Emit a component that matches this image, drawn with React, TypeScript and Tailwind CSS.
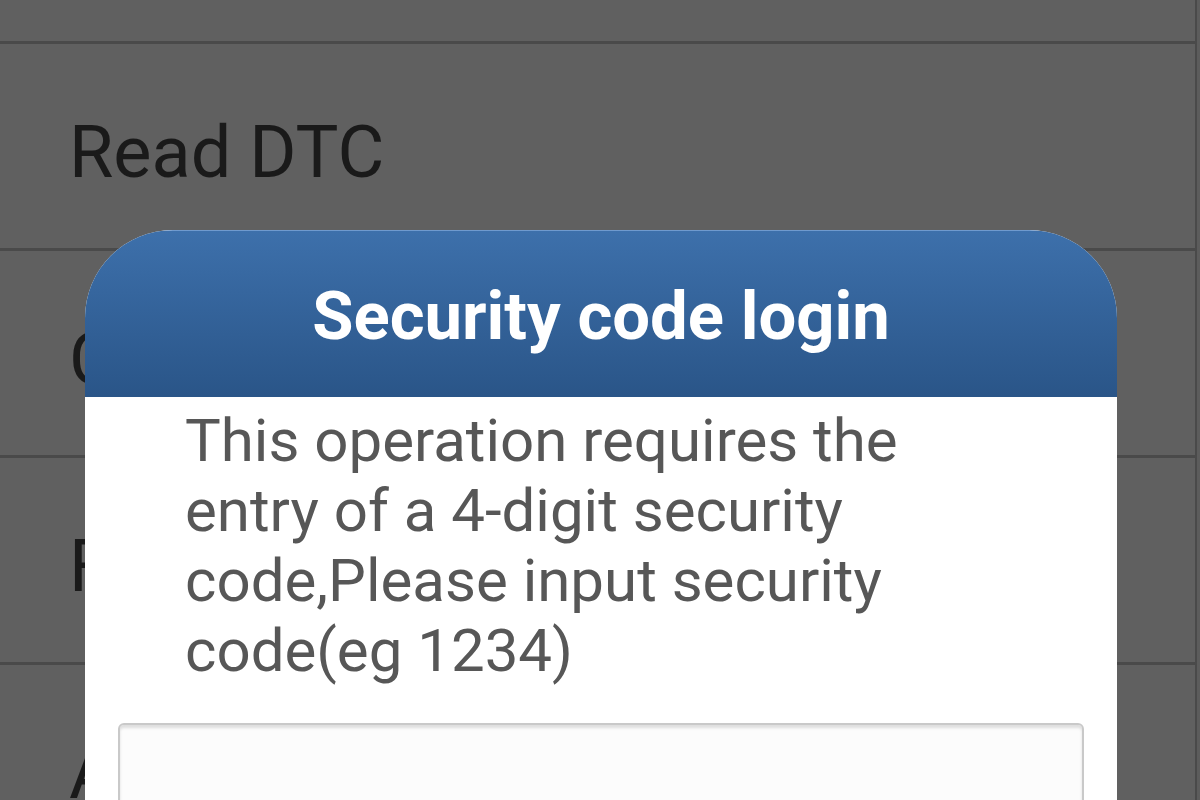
const rows = ['', 'Read DTC', 'Clear DTC', 'Freeze Frame', 'Actuation Test'];

function MenuRow({ label, first }: { label: string; first?: boolean }) {
  return (
    <div
      className={
        first
          ? 'h-[44px] border-b-[3px] border-r-2 border-[#4a4a4a]'
          : 'h-[207px] border-b-[3px] border-r-2 border-[#4a4a4a] flex items-center pl-[69px] pt-[14px]'
      }
    >
      {!first && (
        <span className="text-[72px] leading-none text-[#1a1a1a] whitespace-nowrap">{label}</span>
      )}
    </div>
  );
}

export default function App() {
  return (
    <div
      className="relative w-[1200px] h-[800px] overflow-hidden bg-[#5c5c5c]"
      style={{ fontFamily: 'Roboto, "Noto Sans", sans-serif' }}
    >
      {/* Menu list behind */}
      <div className="w-[1197px] bg-[#606060]">
        {rows.map((label, i) => (
          <MenuRow key={i} label={label} first={i === 0} />
        ))}
      </div>

      {/* Dialog */}
      <div className="absolute left-[85px] top-[230px] w-[1032px] h-[620px] rounded-t-[88px] overflow-hidden bg-white">
        <div className="h-[167px] flex items-center justify-center bg-gradient-to-b from-[#3d70ab] to-[#2a5588] border-t border-[#6f9ace]">
          <span className="text-[67px] font-bold text-white leading-none pt-[4px]">Security code login</span>
        </div>
        <div className="pl-[100px] pt-[9px] w-[900px]">
          <p className="text-[60px] leading-[70px] text-[#575757]">
            This operation requires the entry of a 4-digit security code,Please input security code(eg 1234)
          </p>
        </div>
        <div className="mx-[33px] mt-[37px] h-[200px] rounded-[6px] border-2 border-[#c9c9c9] bg-[#fcfcfc] shadow-[inset_0_3px_3px_rgba(0,0,0,0.12)]" />
      </div>
    </div>
  );
}
